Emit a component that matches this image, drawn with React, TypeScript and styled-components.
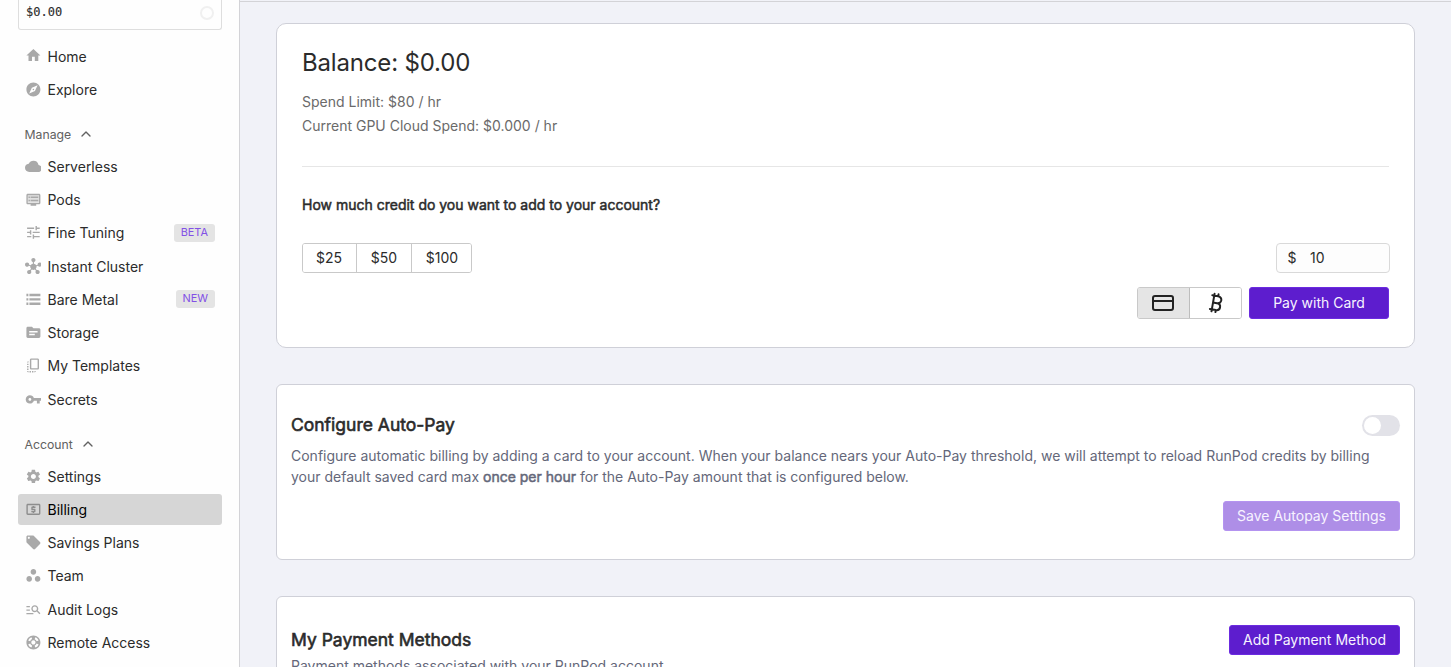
import React from "react";
import styled, { createGlobalStyle } from "styled-components";
import { MdHome, MdExplore, MdCloud, MdTune, MdHub, MdSource, MdCopyAll, MdVpnKey, MdSettings, MdLocalAtm, MdLocalOffer, MdWorkspaces, MdManageSearch, MdSupport } from "react-icons/md";
import { Bitcoin, ChevronUp, CreditCard } from "lucide-react";

const Global = createGlobalStyle`
  * { box-sizing: border-box; }
  body { margin: 0; font-family: Inter, "Liberation Sans", sans-serif; font-size: 14px; color: #2b2b2b; background: #f1f2f8; }
`;
const Shell = styled.div`display: flex; height: 667px; overflow: hidden;`;
const Sidebar = styled.aside`
  width: 240px; flex: none; background: #fefefe; border-right: 1px solid #d3d3d7;
  padding: 0 17px 0 18px; display: flex; flex-direction: column;
`;
const Credit = styled.div`
  height: 30px; flex: none; border: 1px solid #dedede; border-top: 0; border-radius: 0 0 3px 3px;
  display: flex; justify-content: space-between; padding: 5px 7px 0 7px;
  font: 12px/14px "DejaVu Sans Mono", monospace; -webkit-text-stroke: 0.12px currentColor; margin-bottom: 9.5px;
`;
const Ring = styled.span`width: 14px; height: 14px; border: 2px solid #f0f0f0; border-radius: 50%; margin-top: 1px;`;
const Item = styled.a<{ $active?: boolean }>`
  height: 31px; margin: 1.125px 0; flex: none; border-radius: 3px; padding: 0 7px 0 6.6px;
  display: flex; align-items: center;
  background: ${(p) => (p.$active ? "#d6d6d6" : "transparent")};
  color: ${(p) => (p.$active ? "#000" : "#2b2b2b")};
  svg { width: 16.8px; height: 16.8px; margin: 0 6.1px 0.5px 0; color: ${(p) => (p.$active ? "#8d8d8d" : "#a9a9a9")}; }
`;
const Tag = styled.span`
  margin-left: auto; background: #e4e4e4; color: #8250e6; border-radius: 3px; padding: 0 7px 1px;
  font-size: 10.9px; line-height: 17px;
`;
const Group = styled.div`
  height: 43.8px; flex: none; padding: 13px 6.5px 0; display: flex; align-items: center; gap: 7px;
  font-size: 12.25px; color: #616161;
  svg { width: 16px; height: 16px; }
`;
const Main = styled.main`
  flex: 1; border-top: 1px solid #d3d3d7; margin-top: 1px; padding: 21px 36px 0 36px;
  display: flex; flex-direction: column; gap: 36px;
`;
const Card = styled.section<{ $h: number; $pad: string; $r: number }>`
  height: ${(p) => p.$h}px; flex: none; padding: ${(p) => p.$pad}; background: #fff;
  border: 1px solid #cfd0d8; border-radius: ${(p) => p.$r}px;
`;
const Balance = styled.h1`margin: 0; font-size: 24px; font-weight: 400; line-height: 32px; letter-spacing: -0.17px;`;
const Spend = styled.div`margin: 11px 0 28px; color: #6a6a6a; line-height: 24px;`;
const Rule = styled.hr`margin: 0; border: 0; border-top: 1px solid #e6e6e6;`;
const Question = styled.p`margin: 27px 0 27px; line-height: 22px; -webkit-text-stroke: 0.5px currentColor;`;
const Row = styled.div<{ $end?: boolean }>`
  display: flex; align-items: center; justify-content: ${(p) => (p.$end ? "flex-end" : "space-between")};
`;
const Segments = styled.div`display: flex; border: 1px solid #c9c9c9; border-radius: 3px; overflow: hidden;`;
const Amount = styled.button<{ $w: number }>`
  width: ${(p) => p.$w}px; height: 28px; padding: 0 0 1px; border: 0; background: #fff; font: inherit; color: inherit;
  & + & { border-left: 1px solid #c9c9c9; }
  &:first-child { padding-right: 1px; }
  &:last-child { padding-left: 1px; }
`;
const Field = styled.div`
  width: 114px; height: 30px; border: 1px solid #d9d9d9; border-radius: 4px; background: #fdfdfd;
  display: flex; align-items: center; padding: 0 10.5px 1px; gap: 13.5px; margin-right: -1px;
`;
const Method = styled.button<{ $on?: boolean }>`
  width: ${(p) => (p.$on ? 51 : 52)}px; height: 30px; border: 0; display: grid; place-items: center; color: #222;
  padding: 0 ${(p) => (p.$on ? 1 : 0)}px 0 0;
  background: ${(p) => (p.$on ? "#e5e5e5" : "#fff")};
  & + & { border-left: 1px solid #bdbdbd; }
`;
const Pay = styled.div`display: flex; justify-content: flex-end; gap: 7px; margin-top: 14px;`;
const Button = styled.button<{ $w: number; $h: number; $off?: boolean }>`
  width: ${(p) => p.$w}px; height: ${(p) => p.$h}px; padding: 0 0 1px; flex: none; border-radius: 3px; font: inherit;
  color: #f7f3ff;
  background: ${(p) => (p.$off ? "#ae8ee7" : "#5d1dce")}; border: 1px solid ${(p) => (p.$off ? "#b493f0" : "#6b2be0")};
`;
const Title = styled.h2`
  margin: 0; padding-bottom: 2px; font-size: 17.5px; font-weight: 400; line-height: 27px;
  -webkit-text-stroke: 0.6px currentColor;
`;
const Copy = styled.p<{ $top: number }>`
  margin: ${(p) => p.$top}px 0 14px; color: #646779; line-height: 21px;
  b { font-weight: 400; -webkit-text-stroke: 0.5px currentColor; }
`;
const Switch = styled.span`
  width: 38px; height: 21px; border-radius: 11px; background: #e2e2e8; padding: 2px;
  &::before { content: ""; display: block; width: 17px; height: 17px; border-radius: 50%; background: #fff; }
`;

const PodsIcon = () => (
  <svg viewBox="0 0 24 24" fill="currentColor">
    <path opacity=".35" d="M4 6h16v11H4z" />
    <path d="M20 4H4c-1.1 0-2 .9-2 2v11c0 1.1.9 2 2 2h4v2h8v-2h4c1.1 0 2-.9 2-2V6c0-1.1-.9-2-2-2zm0 13H4V6h16v11zM19 8H8v2h11V8zm0 4.500H8v2h11v-2zM7 8H5v2h2V8zm0 4.500H5v2h2v-2z" />
  </svg>
);
const BareMetalIcon = () => (
  <svg viewBox="0 0 24 24" fill="currentColor">
    <path d="M2 4h2.800v3.400H2zM6.300 4H22v3.400H6.300zM2 10.300h2.800v3.400H2zM6.300 10.300H22v3.400H6.300zM2 16.600h2.800V20H2zM6.300 16.600H22V20H6.300z" />
  </svg>
);

export default function App() {
  return (
    <>
      <Global />
      <Shell>
        <Sidebar>
          <Credit>$0.00<Ring /></Credit>
          <Item><MdHome />Home</Item>
          <Item><MdExplore />Explore</Item>
          <Group>Manage<ChevronUp /></Group>
          <Item><MdCloud />Serverless</Item>
          <Item><PodsIcon />Pods</Item>
          <Item><MdTune />Fine Tuning<Tag>BETA</Tag></Item>
          <Item><MdHub />Instant Cluster</Item>
          <Item><BareMetalIcon />Bare Metal<Tag>NEW</Tag></Item>
          <Item><MdSource />Storage</Item>
          <Item><MdCopyAll />My Templates</Item>
          <Item><MdVpnKey />Secrets</Item>
          <Group>Account<ChevronUp /></Group>
          <Item><MdSettings />Settings</Item>
          <Item $active><MdLocalAtm />Billing</Item>
          <Item><MdLocalOffer />Savings Plans</Item>
          <Item><MdWorkspaces />Team</Item>
          <Item><MdManageSearch />Audit Logs</Item>
          <Item><MdSupport />Remote Access</Item>
        </Sidebar>
        <Main>
          <Card $h={325} $pad="23px 25px" $r={10}>
            <Balance>Balance: $0.00</Balance>
            <Spend>Spend Limit: $80 / hr<br />Current GPU Cloud Spend: $0.000 / hr</Spend>
            <Rule />
            <Question>How much credit do you want to add to your account?</Question>
            <Row>
              <Segments>
                <Amount $w={53}>$25</Amount>
                <Amount $w={55}>$50</Amount>
                <Amount $w={60}>$100</Amount>
              </Segments>
              <Field><span>$</span><span>10</span></Field>
            </Row>
            <Pay>
              <Segments>
                <Method $on><CreditCard size={24} /></Method>
                <Method><Bitcoin size={24} /></Method>
              </Segments>
              <Button $w={140} $h={32}>Pay with Card</Button>
            </Pay>
          </Card>
          <Card $h={176} $pad="26px 14px" $r={6}>
            <Row><Title>Configure Auto-Pay</Title><Switch /></Row>
            <Copy $top={5}>
              Configure automatic billing by adding a card to your account. When your balance nears your Auto-Pay threshold, we will attempt to reload RunPod credits by billing your default saved card max <b>once per hour</b> for the Auto-Pay amount that is configured below.
            </Copy>
            <Row $end><Button $w={177} $h={30} $off>Save Autopay Settings</Button></Row>
          </Card>
          <Card $h={176} $pad="28px 14px" $r={6}>
            <Row><Title>My Payment Methods</Title><Button $w={171} $h={30}>Add Payment Method</Button></Row>
            <Copy $top={0}>Payment methods associated with your RunPod account.</Copy>
          </Card>
        </Main>
      </Shell>
    </>
  );
}
